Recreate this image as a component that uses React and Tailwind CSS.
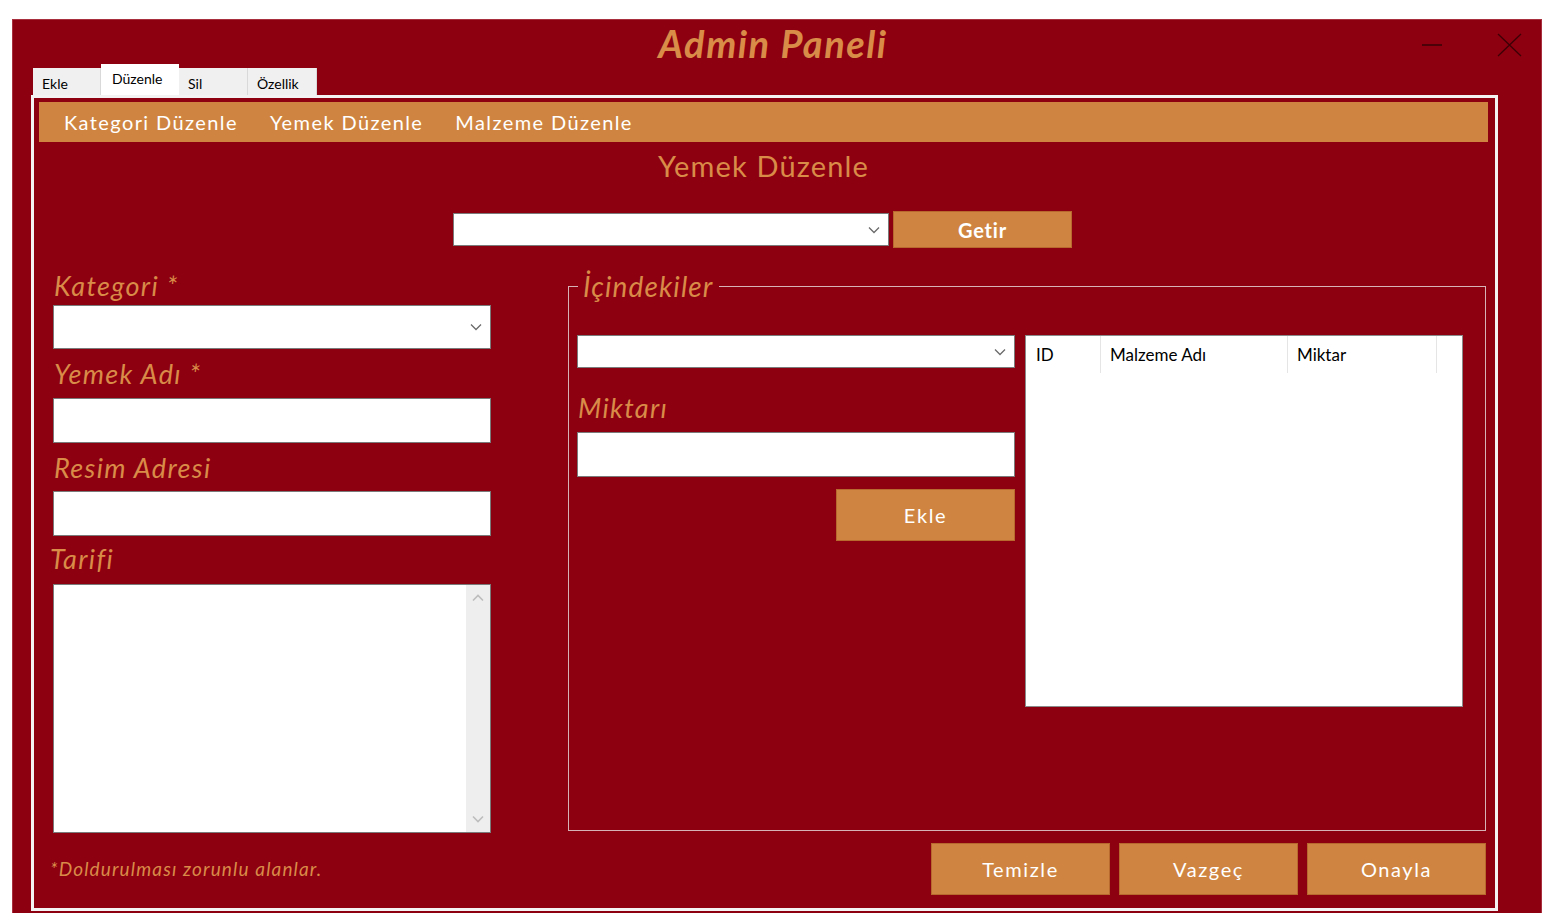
import React from 'react';

const FONT = { fontFamily: 'Lato, "Open Sans", "Liberation Sans", sans-serif' };

const Chevron = ({ className = '' }) => (
  <svg className={className} width="12" height="8" viewBox="0 0 12 8" fill="none">
    <path d="M1 1.5l5 5 5-5" stroke="#6b6b6b" strokeWidth="1.3" />
  </svg>
);

const Combo = ({ className = '' }) => (
  <div className={`flex items-center justify-end bg-white border border-[#7a7a7a] pr-2 ${className}`}>
    <Chevron />
  </div>
);

const TextBox = ({ className = '' }) => (
  <div className={`bg-white border border-[#7a7a7a] ${className}`} />
);

const OrangeButton = ({ children, className = '' }) => (
  <button className={`bg-[#cf8541] border border-[#b8692e] text-white text-[20px] tracking-[0.08em] flex items-center justify-center ${className}`}>
    {children}
  </button>
);

const Label = ({ children, className = '' }) => (
  <div className={`h-[32px] leading-[32px] text-[27px] italic text-[#d98b48] tracking-[0.05em] ${className}`}>{children}</div>
);

const tabs = [
  { name: 'Ekle', w: 'w-[68px]', active: false },
  { name: 'Düzenle', w: 'w-[78px]', active: true },
  { name: 'Sil', w: 'w-[69px]', active: false },
  { name: 'Özellik', w: 'w-[69px]', active: false },
];

export default function App() {
  return (
    <div className="w-[1561px] h-[913px] bg-white overflow-hidden pt-[19px] pl-[12px]" style={FONT}>
      <div className="w-[1530px] h-[894px] bg-[#8c0010] border-t border-x border-[#a8303e] flex flex-col">
        {/* title bar */}
        <div className="h-[44px] grid grid-cols-[1fr_auto_1fr] items-center">
          <div />
          <div className="text-[38px] leading-none font-bold italic text-[#d98b48] tracking-[0.04em] pt-[2px] pr-[8px]">Admin Paneli</div>
          <div className="flex items-center justify-end gap-[55px] pr-[19px] pt-[6px]">
            <svg width="20" height="4" viewBox="0 0 20 4"><path d="M0 2h20" stroke="#3d0006" strokeWidth="1.6" /></svg>
            <svg width="25" height="24" viewBox="0 0 25 24" fill="none"><path d="M1 1l23 22M24 1L1 23" stroke="#3d0006" strokeWidth="1.3" /></svg>
          </div>
        </div>

        {/* tabs */}
        <div className="flex items-end pl-[20px] h-[31px]">
          {tabs.map((t) => (
            <div
              key={t.name}
              className={`${t.w} ${t.active ? 'h-[31px] bg-white pt-[4px] pl-[11px]' : 'h-[27px] bg-[#f0f0f0] pt-[5px] pl-[9px] border-r border-[#d9d9d9]'} text-[14px] text-black`}
            >
              {t.name}
            </div>
          ))}
        </div>

        {/* tab page */}
        <div className="ml-[18px] mb-[2px] w-[1467px] flex-1 border-[3px] border-[#f3f3f3] pl-[5px] pr-[7px] pt-[4px] flex flex-col">
          {/* menu strip */}
          <div className="h-[40px] bg-[#cf8541] flex items-center pl-[25px] gap-[32px] text-white text-[20px] tracking-[0.07em]">
            <span>Kategori Düzenle</span>
            <span>Yemek Düzenle</span>
            <span>Malzeme Düzenle</span>
          </div>

          <div className="text-center text-[29px] leading-[32px] text-[#d98b48] tracking-[0.04em] mt-[8px]">Yemek Düzenle</div>

          <div className="flex justify-center items-center gap-[4px] mt-[29px] pr-[2px]">
            <Combo className="w-[436px] h-[33px]" />
            <button className="w-[179px] h-[37px] bg-[#cf8541] border border-[#b8692e] text-white text-[20px] font-bold tracking-[0.04em]">Getir</button>
          </div>

          {/* main area */}
          <div className="flex items-start pl-[14px] mt-[22px]">
            {/* left column */}
            <div className="w-[438px] flex flex-col">
              <Label className="pl-[1px]">Kategori *</Label>
              <Combo className="h-[44px] mt-[3px]" />
              <Label className="pl-[1px] mt-[9px]">Yemek Adı *</Label>
              <TextBox className="h-[45px] mt-[8px]" />
              <Label className="pl-[1px] mt-[9px]">Resim Adresi</Label>
              <TextBox className="h-[45px] mt-[7px]" />
              <Label className="-ml-[3px] mt-[7px]">Tarifi</Label>
              <div className="h-[249px] mt-[9px] bg-white border border-[#7a7a7a] flex justify-end">
                <div className="w-[24px] bg-[#eeeeee] flex flex-col items-center justify-between py-[9px]">
                  <svg width="12" height="8" viewBox="0 0 12 8" fill="none"><path d="M1 6.5l5-5 5 5" stroke="#bdbdbd" strokeWidth="1.6" /></svg>
                  <svg width="12" height="8" viewBox="0 0 12 8" fill="none"><path d="M1 1.5l5 5 5-5" stroke="#bdbdbd" strokeWidth="1.6" /></svg>
                </div>
              </div>
            </div>

            {/* group box */}
            <fieldset className="ml-[77px] w-[918px] h-[561px] border border-[#d6b2b7] pl-[8px] pr-[22px]">
              <legend className="ml-[1px] px-[5px] text-[28px] leading-[32px] italic text-[#d98b48] tracking-[0.04em]">İçindekiler</legend>
              <div className="flex items-start gap-[10px] mt-[33px]">
                <div className="w-[438px] flex flex-col">
                  <Combo className="h-[33px]" />
                  <Label className="mt-[24px] pl-[1px]">Miktarı</Label>
                  <TextBox className="h-[45px] mt-[8px]" />
                  <div className="flex justify-end mt-[12px]">
                    <OrangeButton className="w-[179px] h-[52px]">Ekle</OrangeButton>
                  </div>
                </div>
                <div className="w-[438px] h-[372px] bg-white border border-[#8a8a8a]">
                  <div className="flex h-[37px] text-[17px] text-black">
                    <div className="w-[75px] border-r border-[#e5e5e5] pl-[10px] flex items-center">ID</div>
                    <div className="w-[187px] border-r border-[#e5e5e5] pl-[9px] flex items-center">Malzeme Adı</div>
                    <div className="w-[149px] border-r border-[#e5e5e5] pl-[9px] flex items-center">Miktar</div>
                  </div>
                </div>
              </div>
            </fieldset>
          </div>

          {/* bottom row */}
          <div className="flex items-center justify-between mt-[10px] pl-[11px] w-[1447px]">
            <div className="text-[19px] italic text-[#d98b48] tracking-[0.06em]">*Doldurulması zorunlu alanlar.</div>
            <div className="flex gap-[9px]">
              <OrangeButton className="w-[179px] h-[52px]">Temizle</OrangeButton>
              <OrangeButton className="w-[179px] h-[52px]">Vazgeç</OrangeButton>
              <OrangeButton className="w-[179px] h-[52px]">Onayla</OrangeButton>
            </div>
          </div>
        </div>
      </div>
    </div>
  );
}
